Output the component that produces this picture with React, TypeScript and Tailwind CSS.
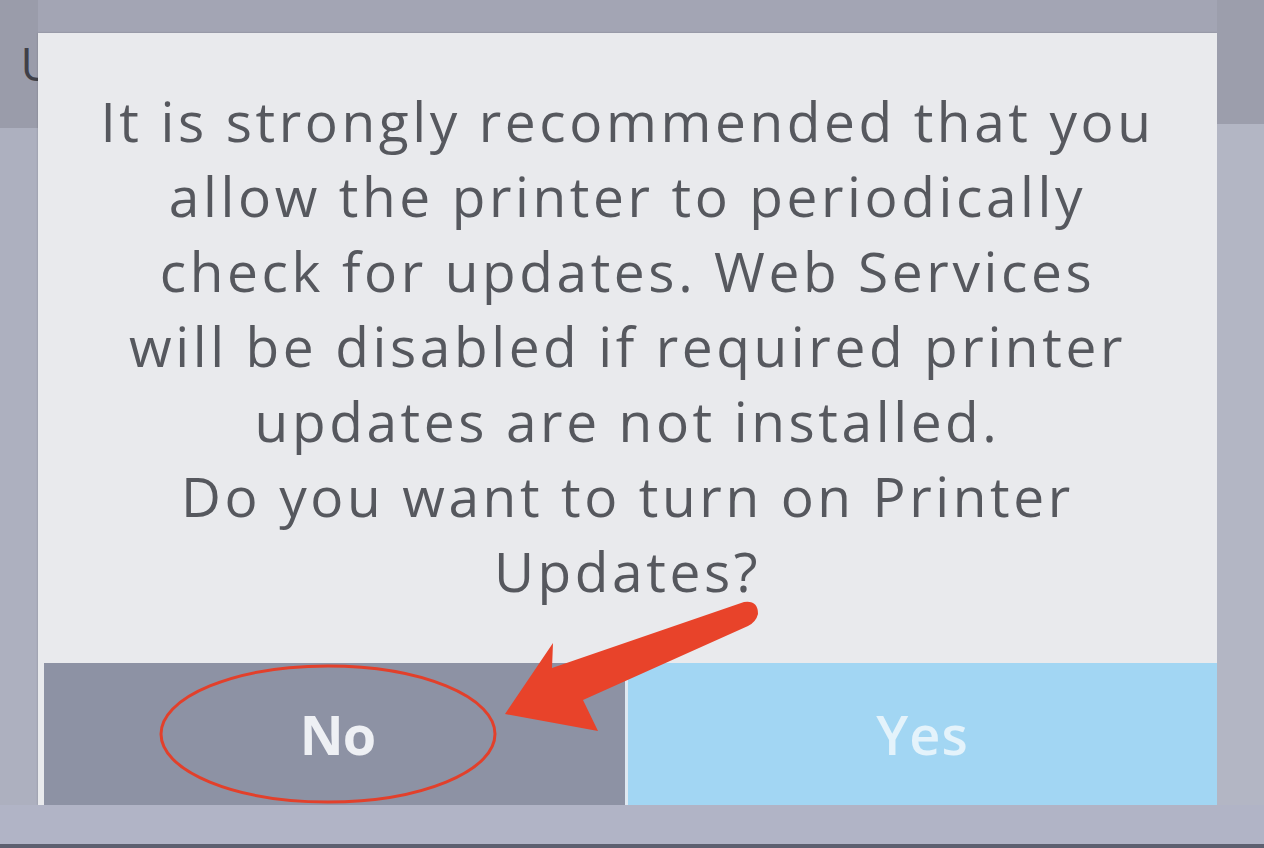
import React from 'react';

const lines = [
  'It is strongly recommended that you',
  'allow the printer to periodically',
  'check for updates. Web Services',
  'will be disabled if required printer',
  'updates are not installed.',
  'Do you want to turn on Printer',
  'Updates?',
];

export default function App() {
  return (
    <div className="relative w-[1264px] h-[848px] overflow-hidden bg-[#a3a5b4] flex flex-col" style={{ fontFamily: '"Open Sans", "Noto Sans", sans-serif' }}>
      <div className="flex flex-1">
        {/* left edge of the screen behind */}
        <div className="w-[38px] flex flex-col">
          <div className="h-[128px] bg-[#9a9caa] flex items-start justify-end pt-[40px]">
            <span className="text-[46px] leading-none text-[#3f4048] -mr-[16px]">U</span>
          </div>
          <div className="flex-1 bg-[#adb0bf]"></div>
        </div>

        <div className="flex-1 flex flex-col pt-[33px]">
          <div className="flex-1 flex flex-col bg-[#e9eaed] shadow-[0_0_2px_rgba(0,0,0,0.2)]">
            <div className="flex-1 pt-[50px] text-center text-[#56585e] text-[55px] leading-[75px] tracking-[3.6px]">
              {lines.map((l) => (
                <div key={l}>{l}</div>
              ))}
            </div>
            <div className="h-[142px] flex pl-[6px]">
              <button className="w-[581px] bg-[#8d92a4] text-[#eef0f4] text-[54px] font-bold tracking-[-1px] flex items-center justify-center pl-[6px]">
                No
              </button>
              <div className="w-[3px] bg-[#dfe9f2]"></div>
              <button className="flex-1 bg-[#a2d6f3] text-[#e4f3fb] text-[54px] font-semibold tracking-[1px] flex items-center justify-center">
                Yes
              </button>
            </div>
          </div>
        </div>

        {/* right edge */}
        <div className="w-[47px] flex flex-col">
          <div className="h-[124px] bg-[#9c9eac]"></div>
          <div className="flex-1 bg-[#b3b6c4]"></div>
        </div>
      </div>
      <div className="h-[43px] bg-[#b1b4c6] border-b-[4px] border-[#5d6070]"></div>

      {/* annotation overlay */}
      <svg className="absolute inset-0 pointer-events-none" width="1264" height="848" viewBox="0 0 1264 848">
        <ellipse cx="328" cy="734" rx="167" ry="68" fill="none" stroke="#e2402b" strokeWidth="3" />
        <path
          d="M505 714 L553 643 L552 668 L744 602 Q758 600 758 614 Q756 622 748 626 L583 700 L598 731 Z"
          fill="#e8432a"
        />
      </svg>
    </div>
  );
}
